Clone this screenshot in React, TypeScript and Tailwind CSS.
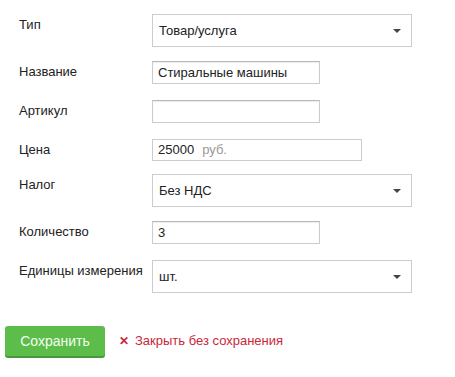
const Arrow = () => (
  <svg width="8" height="4" viewBox="0 0 8 4" className="absolute right-[10px] top-1/2 -translate-y-1/2">
    <path d="M0 0 L8 0 L4 4 Z" fill="#444" />
  </svg>
);

const Select = ({ value }: { value: string }) => (
  <div className="relative flex h-[33px] w-[260px] items-center border border-[#cccccc] bg-white pl-[6px] text-[13px] text-[#222]">
    {value}
    <Arrow />
  </div>
);

const Input = ({ value }: { value?: string }) => (
  <div className="flex h-[23px] w-[168px] items-center border border-[#cccccc] border-t-[#b8b8b8] bg-white pl-[5px] text-[13px] text-[#222] shadow-[inset_0_1px_1px_rgba(0,0,0,0.08)]">
    {value}
  </div>
);

const Row = ({ label, mt, children }: { label: string; mt: string; children: React.ReactNode }) => (
  <div className={`flex ${mt}`}>
    <label className="w-[133px] shrink-0 pt-[1px] text-[13px] text-[#222]">{label}</label>
    {children}
  </div>
);

export default function App() {
  return (
    <div className="h-[377px] w-[455px] bg-white pl-[19px] pt-[14px] font-['Liberation_Sans',Arial,sans-serif]">
      <Row label="Тип" mt="mt-0">
        <Select value="Товар/услуга" />
      </Row>
      <Row label="Название" mt="mt-[14px]">
        <Input value="Стиральные машины" />
      </Row>
      <Row label="Артикул" mt="mt-[16px]">
        <Input />
      </Row>
      <Row label="Цена" mt="mt-[16px]">
        <div className="flex h-[22px] w-[210px] items-center border border-[#cccccc] bg-white pl-[5px] text-[13px] text-[#222]">
          25000
          <span className="ml-[8px] text-[#999]">руб.</span>
        </div>
      </Row>
      <Row label="Налог" mt="mt-[13px]">
        <Select value="Без НДС" />
      </Row>
      <Row label="Количество" mt="mt-[14px]">
        <Input value="3" />
      </Row>
      <Row label="Единицы измерения" mt="mt-[16px]">
        <Select value="шт." />
      </Row>
      <div className="-ml-[14px] mt-[33px] flex items-center">
        <button className="h-[30px] w-[100px] rounded-[3px] bg-[#5cbd4b] text-[14px] text-[#f4fff0] shadow-[0_2px_0_#479a39]">
          Сохранить
        </button>
        <a className="ml-[14px] flex items-center text-[13px] text-[#c8283a]">
          <span className="mr-[6px] text-[12px] font-bold">✕</span>
          Закрыть без сохранения
        </a>
      </div>
    </div>
  );
}
